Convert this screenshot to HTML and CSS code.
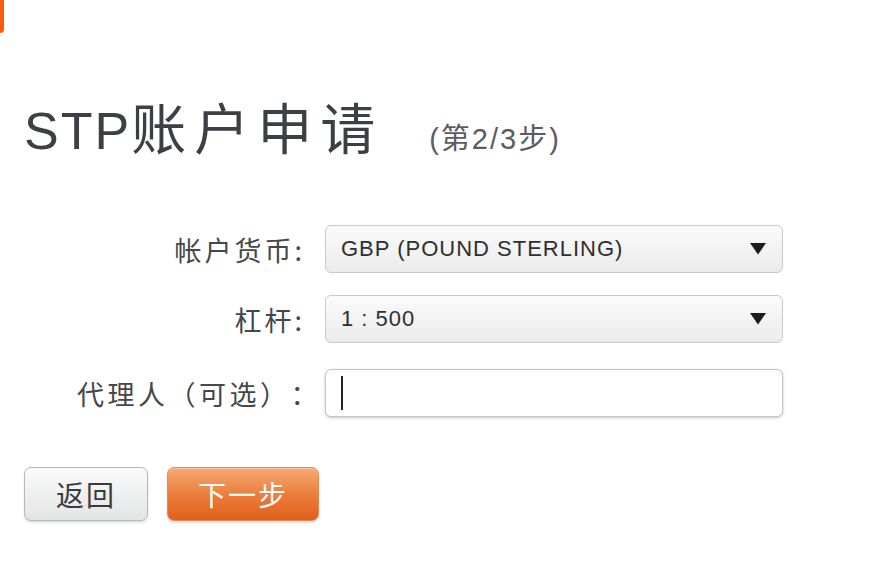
FILE: index.html
```html
<!DOCTYPE html>
<html lang="zh-CN">
<head>
<meta charset="utf-8">
<title>STP账户申请</title>
<link rel="stylesheet" href="styles.css">
</head>
<body>
<div class="corner-tab"></div>
<main class="page">
  <header class="heading">
    <h1 class="title">STP<span class="title-cjk">账户申请</span></h1>
    <span class="step">(第2/3步)</span>
  </header>

  <form class="form">
    <label class="label">帐户货币:</label>
    <div class="select">
      <span class="select-text">GBP (POUND STERLING)</span>
      <svg class="arrow" width="16" height="12" viewBox="0 0 16 12"><polygon points="0,0 16,0 8,11.5" fill="#1c1c1c"/></svg>
    </div>

    <label class="label">杠杆:</label>
    <div class="select">
      <span class="select-text">1 : 500</span>
      <svg class="arrow" width="16" height="12" viewBox="0 0 16 12"><polygon points="0,0 16,0 8,11.5" fill="#1c1c1c"/></svg>
    </div>

    <label class="label label-agent">代理人（可选）：</label>
    <div class="input input-agent"><span class="caret"></span></div>
  </form>

  <div class="actions">
    <button type="button" class="btn btn-back">返回</button>
    <button type="button" class="btn btn-next">下一步</button>
  </div>
</main>
</body>
</html>
```

FILE: styles.css
```css
* { box-sizing: border-box; }

html, body {
  margin: 0;
  padding: 0;
  background: #ffffff;
}

body {
  font-family: "Liberation Sans", "Noto Sans CJK SC", sans-serif;
  color: #3d3f42;
  width: 893px;
  height: 584px;
  overflow: hidden;
  position: relative;
  text-spacing-trim: space-all;
}

.corner-tab {
  position: absolute;
  left: 0;
  top: 0;
  width: 4px;
  height: 33px;
  background: #f85a0e;
  border-bottom-right-radius: 4px;
}

.page {
  padding: 100px 0 0 24px;
}

.heading {
  display: flex;
  align-items: baseline;
  height: 60px;
}

.title {
  margin: 0;
  font-size: 52px;
  font-weight: normal;
  line-height: 60px;
  letter-spacing: 2px;
  color: #3c3f43;
}

.title-cjk {
  font-size: 55px;
  letter-spacing: 8px;
}

.step {
  margin-left: 46px;
  font-size: 29px;
  letter-spacing: 2px;
  color: #5a5c5f;
}

.form {
  display: grid;
  grid-template-columns: 281px 458px;
  column-gap: 20px;
  row-gap: 22px;
  margin-top: 65px;
}

.label {
  display: flex;
  align-items: center;
  justify-content: flex-end;
  font-family: "Noto Sans CJK SC", "Liberation Sans", sans-serif;
  font-size: 27px;
  letter-spacing: 3px;
  color: #45474a;
  height: 48px;
  text-spacing-trim: space-all;
}

.label-agent {
  letter-spacing: 3.5px;
  margin-right: -16px;
}

.label-agent,
.input-agent {
  margin-top: 4px;
}

.select {
  height: 48px;
  display: flex;
  align-items: center;
  justify-content: space-between;
  padding: 0 16px 0 15px;
  border: 1px solid #c9c9c9;
  border-radius: 6px;
  background: linear-gradient(#fbfbfb, #ebebeb);
}

.select-text {
  font-size: 22px;
  letter-spacing: 1px;
  color: #2e2f31;
}

.arrow {
  display: block;
}

.input {
  height: 48px;
  display: flex;
  align-items: center;
  padding-left: 15px;
  border: 1px solid #c4c4c4;
  border-radius: 6px;
  background: #ffffff;
  box-shadow: 0 1px 3px rgba(0, 0, 0, 0.22);
}

.caret {
  width: 2px;
  height: 34px;
  background: #222;
}

.actions {
  display: flex;
  gap: 19px;
  margin-top: 50px;
}

.btn {
  height: 54px;
  border-radius: 7px;
  font-family: "Noto Sans CJK SC", "Liberation Sans", sans-serif;
  font-size: 28px;
  letter-spacing: 2px;
  padding: 0;
  cursor: pointer;
}

.btn-back {
  width: 124px;
  color: #3a3b3d;
  border: 1px solid #b5b6b7;
  background: linear-gradient(#fbfbfb, #e3e4e5);
  box-shadow: 0 2px 2px rgba(0, 0, 0, 0.12);
}

.btn-next {
  width: 152px;
  color: #ffffff;
  border: 1px solid #ea8a4f;
  background: linear-gradient(#f6a875, #ea7b38 55%, #e1601b);
  box-shadow: inset 0 1px 0 rgba(255, 255, 255, 0.35), 0 2px 2px rgba(0, 0, 0, 0.12);
}
```
